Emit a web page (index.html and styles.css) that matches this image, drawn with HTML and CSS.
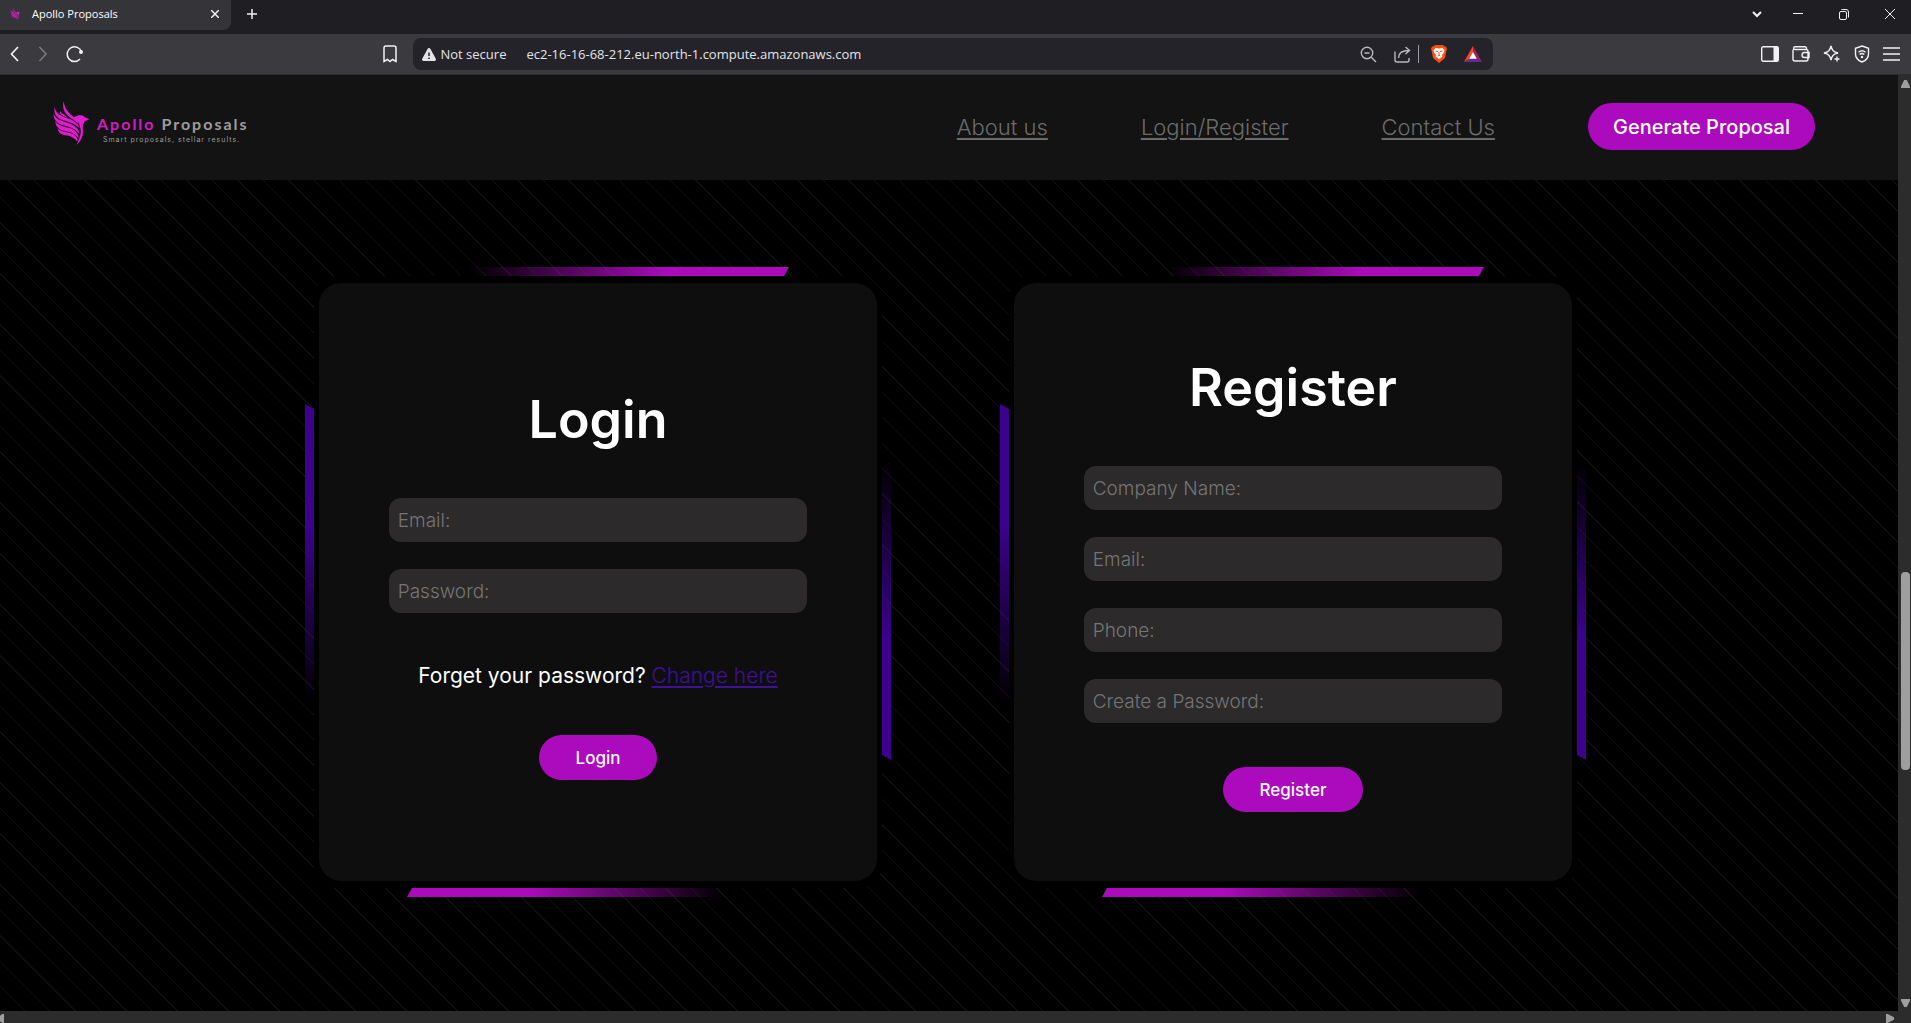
FILE: index.html
```html
<!DOCTYPE html>
<html lang="en">
<head>
<meta charset="utf-8">
<meta name="viewport" content="width=device-width, initial-scale=1">
<title>Apollo Proposals</title>
<link rel="stylesheet" href="styles.css">
</head>
<body>
<svg class="symbols" aria-hidden="true">
  <symbol id="phoenix" viewBox="0 0 111 132">
    <path d="M32 1C27 22 34 36 50 49C58 55 68 60 76 70L74 56C56 44 36 32 32 1Z"/>
    <path d="M5 17C7 36 22 44 44 52C62 58 76 68 80 82C62 64 42 62 26 56C8 48 1 34 5 17Z"/>
    <path d="M21 36C26 44 34 48 44 50C34 40 26 38 21 30Z"/>
    <path d="M2 37C8 58 28 60 46 66C64 72 79 84 79 99C64 80 46 77 30 73C12 68 1 56 2 37Z"/>
    <path d="M7 60C16 76 38 77 52 82C66 87 78 98 77 112C64 95 48 92 34 90C18 87 7 76 7 60Z"/>
    <path d="M14 82C24 93 42 93 54 97C66 101 76 110 73 122C62 108 50 105 38 103C24 101 15 94 14 82Z"/>
    <path d="M68 46C76 42 90 40 96 49L110 55C102 57 96 59 92 67C86 80 94 90 88 106C84 118 78 126 70 132C78 116 86 98 82 82C80 68 74 58 62 50Z"/>
  </symbol>
</svg>

<div class="window">
  <div class="tab-strip">
    <div class="tab">
      <svg class="favicon" aria-hidden="true"><use href="#phoenix"/></svg>
      <span class="tab-title">Apollo Proposals</span>
      <button class="icon-button" aria-label="Close tab"><svg width="8" height="8" viewBox="0 0 8 8"><path d="M0 0l8 8M8 0L0 8" stroke-width="1.500"/></svg></button>
    </div>
    <button class="icon-button new-tab" aria-label="New tab"><svg width="10" height="10" viewBox="0 0 10 10"><path d="M5 0v10M0 5h10" stroke-width="1.500"/></svg></button>
    <div class="window-controls">
      <button class="icon-button tab-search" aria-label="Search tabs"><svg width="10" height="7" viewBox="0 0 10 7"><path d="M1 1l4 4 4-4" stroke-width="2"/></svg></button>
      <button class="icon-button control" aria-label="Minimize"><svg width="10" height="10" viewBox="0 0 10 10"><path d="M0 4.500h10"/></svg></button>
      <button class="icon-button control" aria-label="Restore"><svg width="10" height="11" viewBox="0 0 10 11"><path d="M.5 4a1.500 1.500 0 0 1 1.500-1.500h4a1.500 1.500 0 0 1 1.500 1.500v5a1.500 1.500 0 0 1-1.500 1.500h-4a1.500 1.500 0 0 1-1.500-1.500zM2.500.5H7A2.500 2.500 0 0 1 9.500 3v5.500"/></svg></button>
      <button class="icon-button control" aria-label="Close"><svg width="10" height="10" viewBox="0 0 10 10"><path d="M0 0l10 10M10 0L0 10"/></svg></button>
    </div>
  </div>

  <div class="toolbar">
    <div class="toolbar-left">
      <button class="icon-button" aria-label="Back"><svg width="10" height="16" viewBox="0 0 10 16"><path d="M8 1L1.500 8 8 15" stroke-width="1.700"/></svg></button>
      <button class="icon-button muted" aria-label="Forward"><svg width="10" height="16" viewBox="0 0 10 16"><path d="M1.500 1L8 8l-6.500 7" stroke-width="1.500"/></svg></button>
      <button class="icon-button" aria-label="Reload"><svg width="18" height="18" viewBox="0 0 18 18"><path d="M15.500 7A7.300 7.300 0 1 0 14 14" stroke-width="1.500"/><circle cx="15" cy="7" r="2" fill="currentColor" stroke="none"/></svg></button>
      <button class="icon-button bookmark" aria-label="Bookmark"><svg width="14" height="18" viewBox="0 0 14 18"><path d="M1 3a2 2 0 0 1 2-2h8a2 2 0 0 1 2 2v13.500l-3.500-2L7 16.500l-2.500-2L1 16.500z" stroke-width="1.500"/></svg></button>
    </div>
    <div class="address-bar">
      <button class="site-info"><svg width="14" height="13" viewBox="0 0 14 13"><path d="M7 0c.6 0 1 .3 1.300.8l5.500 10c.5 1 0 2.200-1.300 2.200h-11C.2 13-.3 11.800.2 10.800l5.500-10C6 .3 6.400 0 7 0z" fill="currentColor" stroke="none"/><path d="M7 4.500v3.500M7 9.500v1.500" stroke="#242329" stroke-width="1.500"/></svg>Not secure</button>
      <input class="url" type="text" aria-label="Address" value="ec2-16-16-68-212.eu-north-1.compute.amazonaws.com">
      <button class="icon-button soft" aria-label="Zoom"><svg width="17" height="17" viewBox="0 0 17 17"><circle cx="7" cy="7" r="5.700" stroke-width="1.400"/><path d="M11.300 11.300l4.700 4.700M4.500 7h5" stroke-width="1.400"/></svg></button>
      <button class="icon-button soft share" aria-label="Share"><svg width="17" height="17" viewBox="0 0 17 17"><path d="M1 5.500V14a2 2 0 0 0 2 2h10a2 2 0 0 0 2-2v-2M4.500 12C4.500 7 8 4.500 15 4.500M11.500 1l4 3.500-4 3.500" stroke-width="1.400"/></svg></button>
      <span class="divider"></span>
      <button class="icon-button shield" aria-label="Brave Shields"><svg width="16" height="18" viewBox="0 0 16 18"><path d="M4 0h8l1.500 1.500L15 1.500 16 4l-.7 2L14 13l-6 5-6-5L.7 6 0 4l1-2.500 1.500 0z" fill="#fb4f14" stroke="none"/><path d="M4.500 3L8 3.600 11.500 3l2 2.500-.6 2-2 2.500.6 1.500L8 14l-3.500-2.500L5.100 10l-2-2.500-.6-2z" fill="#fff" stroke="none"/><path d="M4.500 6l2.500.6M11.500 6L9 6.600M8 7v3l-1.300 1M8 10l1.300 1" stroke="#fb4f14"/></svg></button>
      <button class="icon-button rewards" aria-label="Rewards"><svg width="18" height="16" viewBox="0 0 18 16"><path d="M9 0L0 16l6-3.500L9 6z" fill="#ff4724" stroke="none"/><path d="M9 0l9 16-6-3.500L9 6z" fill="#9e1f63" stroke="none"/><path d="M0 16h18l-6-3.500H6z" fill="#662d91" stroke="none"/><path d="M9 6l3.800 6.700H5.200z" fill="#fff" stroke="none"/></svg></button>
    </div>
    <div class="toolbar-right">
      <button class="icon-button" aria-label="Sidebar"><svg width="18" height="16" viewBox="0 0 18 16"><rect x=".7" y=".7" width="16.600" height="14.600" rx="1.500" stroke-width="1.400"/><path d="M12.500 1H17v14h-4.500z" fill="currentColor" stroke="none"/></svg></button>
      <button class="icon-button" aria-label="Wallet"><svg width="18" height="16" viewBox="0 0 18 16"><path d="M1 3.500V13a2 2 0 0 0 2 2h11a2 2 0 0 0 2-2V5.500a2 2 0 0 0-2-2H3A1.300 1.300 0 0 1 3 .8h10a1.500 1.500 0 0 1 1.500 1.500v1M17 6.500h-4.500a2.500 2.500 0 0 0 0 5H17z" stroke-width="1.400"/></svg></button>
      <button class="icon-button" aria-label="Assistant"><svg width="18" height="18" viewBox="0 0 18 18"><path d="M8 1c1 4.500 2.500 6 7 7-4.500 1-6 2.500-7 7-1-4.500-2.500-6-7-7 4.500-1 6-2.500 7-7zM14 11.500v5M11.500 14h5" stroke-width="1.400"/></svg></button>
      <button class="icon-button" aria-label="VPN"><svg width="16" height="18" viewBox="0 0 16 18"><path d="M8 1l6.500 2.300V9c0 4-2.500 6.500-6.500 8-4-1.500-6.500-4-6.500-8V3.300zM4.500 7.200c2-1.600 5-1.600 7 0M5.700 9.500c1.300-1.200 3.300-1.200 4.600 0" stroke-width="1.400"/><circle cx="8" cy="12" r="1.200" fill="currentColor" stroke="none"/></svg></button>
      <button class="icon-button" aria-label="Menu"><svg width="17" height="14" viewBox="0 0 17 14"><path d="M0 1h17M0 7h17M0 13h17" stroke-width="1.400"/></svg></button>
    </div>
  </div>

  <div class="viewport">
    <div class="page">
      <header class="site-header">
        <a class="logo" href="#">
          <svg class="logo-mark" aria-hidden="true"><use href="#phoenix"/></svg>
          <span class="logo-text">
            <span class="logo-name"><span class="logo-accent">Apollo</span> Proposals</span>
            <span class="logo-tagline">Smart proposals, stellar results.</span>
          </span>
        </a>
        <nav class="site-nav">
          <a class="nav-link" href="#">About us</a>
          <a class="nav-link" href="#">Login/Register</a>
          <a class="nav-link" href="#">Contact Us</a>
          <button class="pill pill-large">Generate Proposal</button>
        </nav>
      </header>

      <main class="accounts">
        <section class="frame">
          <span class="beam beam-top"></span><span class="beam beam-right"></span>
          <span class="beam beam-bottom"></span><span class="beam beam-left"></span>
          <form class="card">
            <h2 class="card-title">Login</h2>
            <div class="fields">
              <input class="field" type="email" aria-label="Email" placeholder="Email:">
              <input class="field" type="password" aria-label="Password" placeholder="Password:">
            </div>
            <p class="reset">Forget your password? <a class="reset-link" href="#">Change here</a></p>
            <button class="pill" type="button">Login</button>
          </form>
        </section>

        <section class="frame">
          <span class="beam beam-top"></span><span class="beam beam-right"></span>
          <span class="beam beam-bottom"></span><span class="beam beam-left"></span>
          <form class="card">
            <h2 class="card-title">Register</h2>
            <div class="fields">
              <input class="field" type="text" aria-label="Company Name" placeholder="Company Name:">
              <input class="field" type="email" aria-label="Email" placeholder="Email:">
              <input class="field" type="tel" aria-label="Phone" placeholder="Phone:">
              <input class="field" type="password" aria-label="Create a Password" placeholder="Create a Password:">
            </div>
            <button class="pill" type="button">Register</button>
          </form>
        </section>
      </main>
    </div>

    <div class="scrollbar-y">
      <span class="arrow-up"></span>
      <span class="track-before"></span>
      <span class="thumb"></span>
      <span class="track-after"></span>
      <span class="arrow-down"></span>
    </div>
    <div class="scrollbar-x">
      <span class="arrow-left"></span>
      <span class="arrow-right"></span>
    </div>
  </div>
</div>
</body>
</html>
```
FILE: styles.css
```css
* { box-sizing: border-box; }

body {
  margin: 0;
  background: #000;
  color: #fff;
  font-family: Inter, "Liberation Sans", sans-serif;
}

button, input { font-family: inherit; margin: 0; }
svg { display: block; }
.symbols { display: none; }

.window {
  display: grid;
  grid-template-rows: 34px 41px 1fr;
  height: 100vh;
}

/* Browser tab strip */
.tab-strip {
  display: flex;
  align-items: center;
  padding-bottom: 4px;
  background: #1f1e23;
  font-family: "Open Sans", "Noto Sans", sans-serif;
}

.tab {
  display: flex;
  align-items: center;
  gap: 11px;
  width: 231px;
  height: 30px;
  padding: 0 12px 2px 10px;
  background: #353439;
  border-radius: 0 0 8px 0;
}

.favicon { width: 11px; height: 12px; fill: #d41cc4; }
.tab-title { flex: 1; font-size: 11px; line-height: 16px; }

.icon-button {
  display: flex;
  align-items: center;
  justify-content: center;
  padding: 0;
  border: 0;
  background: none;
  color: #f2f2f4;
}

.icon-button svg, .site-info svg {
  fill: none;
  stroke: currentColor;
}

.icon-button.muted { color: #7d7c81; }
.icon-button.soft { color: #b9b8bd; }
.new-tab { margin-left: 16px; padding-bottom: 2px; }

.window-controls { display: flex; margin-left: auto; padding-bottom: 2px; }
.tab-search { width: 36px; padding-left: 4px; }
.control { width: 46px; height: 28px; padding-left: 4px; }

/* Browser toolbar */
.toolbar {
  display: grid;
  grid-template-columns: 1fr minmax(0, 1080px) 1fr;
  align-items: center;
  padding-right: 6px;
  border-bottom: 1px solid #2c2b2f;
  background: #3b3a3f;
  font-family: "Open Sans", "Noto Sans", sans-serif;
}

.toolbar-left { display: flex; align-items: center; gap: 18px; padding: 0 16px 0 10px; }
.bookmark { margin-left: auto; }

.address-bar {
  display: flex;
  align-items: center;
  height: 32px;
  padding: 0 11px 0 9px;
  border-radius: 8px;
  background: #242329;
}

.site-info {
  display: flex;
  align-items: center;
  gap: 5px;
  padding: 0;
  border: 0;
  background: none;
  color: #e4e3e8;
  font-size: 13px;
  line-height: 18px;
}

.url {
  flex: 1;
  min-width: 0;
  padding: 0 20px;
  border: 0;
  background: none;
  color: #e4e3e8;
  font-size: 13px;
  line-height: 18px;
}

.share { margin-left: 17px; }
.divider { width: 1px; height: 18px; margin: 0 12px 0 7px; background: #9b9a9f; }
.rewards { margin-left: 17px; }
.toolbar-right { display: flex; align-items: center; justify-content: flex-end; gap: 13px; padding-right: 5px; }

/* Page viewport with its scrollbars */
.viewport {
  display: grid;
  grid-template-columns: minmax(0, 1fr) 13px;
  grid-template-rows: minmax(0, 1fr) 12px;
  min-height: 0;
}

.page {
  overflow: hidden;
  background: #000 repeating-linear-gradient(45deg, transparent 0 17px, #0f0f0f 17px 18px);
}

.scrollbar-y {
  display: flex;
  flex-direction: column;
  align-items: center;
  padding: 5px 1px 4px 3px;
  background: #2c2c2c;
}

.scrollbar-x {
  display: flex;
  grid-column: 1 / -1;
  align-items: center;
  justify-content: space-between;
  padding: 3px 17px 0 0;
  background: #2c2c2c;
}

.thumb { flex: 198; width: 9px; border-radius: 4px; background: #9f9f9f; }
.track-before { flex: 485; }
.track-after { flex: 230; }

.arrow-up, .arrow-down { width: 9px; height: 8px; background: #9f9f9f; }
.arrow-up { clip-path: polygon(35% 0, 65% 0, 100% 80%, 100% 100%, 0 100%, 0 80%); }
.arrow-down { clip-path: polygon(0 0, 100% 0, 100% 20%, 65% 100%, 35% 100%, 0 20%); }
.arrow-left, .arrow-right { width: 8px; height: 9px; background: #9f9f9f; }
.arrow-left { width: 4px; clip-path: polygon(0 20%, 60% 0, 100% 0, 100% 100%, 60% 100%, 0 80%); }
.arrow-right { clip-path: polygon(0 0, 20% 0, 100% 35%, 100% 65%, 20% 100%, 0 100%); }

/* Site header */
.site-header {
  display: flex;
  align-items: center;
  justify-content: space-between;
  height: 105px;
  padding: 0 83px 2px 53px;
  background: #131313;
}

.logo {
  display: flex;
  align-items: center;
  gap: 7px;
  padding-bottom: 8px;
  color: #9d9d9d;
  text-decoration: none;
}

.logo-mark { width: 37px; height: 44px; fill: #e01bd0; }
.logo-text { display: flex; flex-direction: column; padding-top: 14px; }
.logo-name { font: 700 16px/20px Lato, sans-serif; letter-spacing: 2px; }
.logo-accent { color: #d01fc0; }
.logo-tagline { padding-left: 6px; font: 400 7px/12px Inter, sans-serif; letter-spacing: 1px; }

.site-nav { display: flex; align-items: center; gap: 93px; }

.nav-link {
  color: #6b6b6b;
  font-size: 22px;
  font-weight: 300;
  line-height: 28px;
  text-underline-offset: 3px;
  text-decoration-thickness: 2px;
}

.pill {
  height: 45px;
  padding: 0 37px;
  border: 0;
  border-radius: 24px;
  background: #ac0abd;
  color: #fff;
  font-size: 17px;
  font-weight: 500;
}

.pill-large { height: 47px; padding: 0 25px; font-size: 20px; }

/* Login and register panels */
.accounts {
  display: flex;
  justify-content: center;
  gap: 127px;
  padding: 96px 7px 0 0;
}

.frame {
  position: relative;
  flex: 0 1 568px;
  padding: 7px 5px;
  border-radius: 24px;
  background: #000;
}

.beam { position: absolute; }

.beam-top, .beam-bottom { width: 56%; height: 9px; }
.beam-left, .beam-right { width: 9px; height: 49%; }

.beam-top {
  right: 93px;
  bottom: 100%;
  background: linear-gradient(90deg, transparent, #ac0abd 62%);
  clip-path: polygon(0 0, 100% 0, calc(100% - 5px) 100%, 0 100%);
}

.beam-bottom {
  top: 100%;
  left: 93px;
  background: linear-gradient(270deg, transparent, #ac0abd 62%);
  clip-path: polygon(5px 0, 100% 0, 100% 100%, 0 100%);
}

.beam-left {
  top: 128px;
  right: 100%;
  background: linear-gradient(0deg, transparent, #3c028e 60%);
  clip-path: polygon(0 0, 100% 5px, 100% 100%, 0 100%);
}

.beam-right {
  bottom: 128px;
  left: 100%;
  background: linear-gradient(180deg, transparent, #3c028e 60%);
  clip-path: polygon(0 0, 100% 0, 100% 100%, 0 calc(100% - 5px));
}

.card {
  display: flex;
  flex-direction: column;
  align-items: center;
  justify-content: center;
  min-height: 598px;
  border-radius: 22px;
  background: #0e0e0e;
}

.card-title {
  margin: 0 0 42px;
  font-size: 52px;
  font-weight: 600;
  line-height: 72px;
}

.fields {
  display: flex;
  flex-direction: column;
  gap: 27px;
  width: 75%;
  margin-bottom: 44px;
}

.field {
  width: 100%;
  height: 44px;
  padding: 0 9px;
  border: 0;
  border-radius: 12px;
  background: #2c2a2b;
  color: #fff;
  font-size: 19px;
  font-weight: 300;
}

.field::placeholder { color: #757575; opacity: 1; }

.reset {
  margin: 4px 0 44px;
  font-size: 21px;
  line-height: 30px;
}

.reset-link {
  color: #40109a;
  font-weight: 300;
  text-underline-offset: 3px;
  text-decoration-thickness: 2px;
}
```
